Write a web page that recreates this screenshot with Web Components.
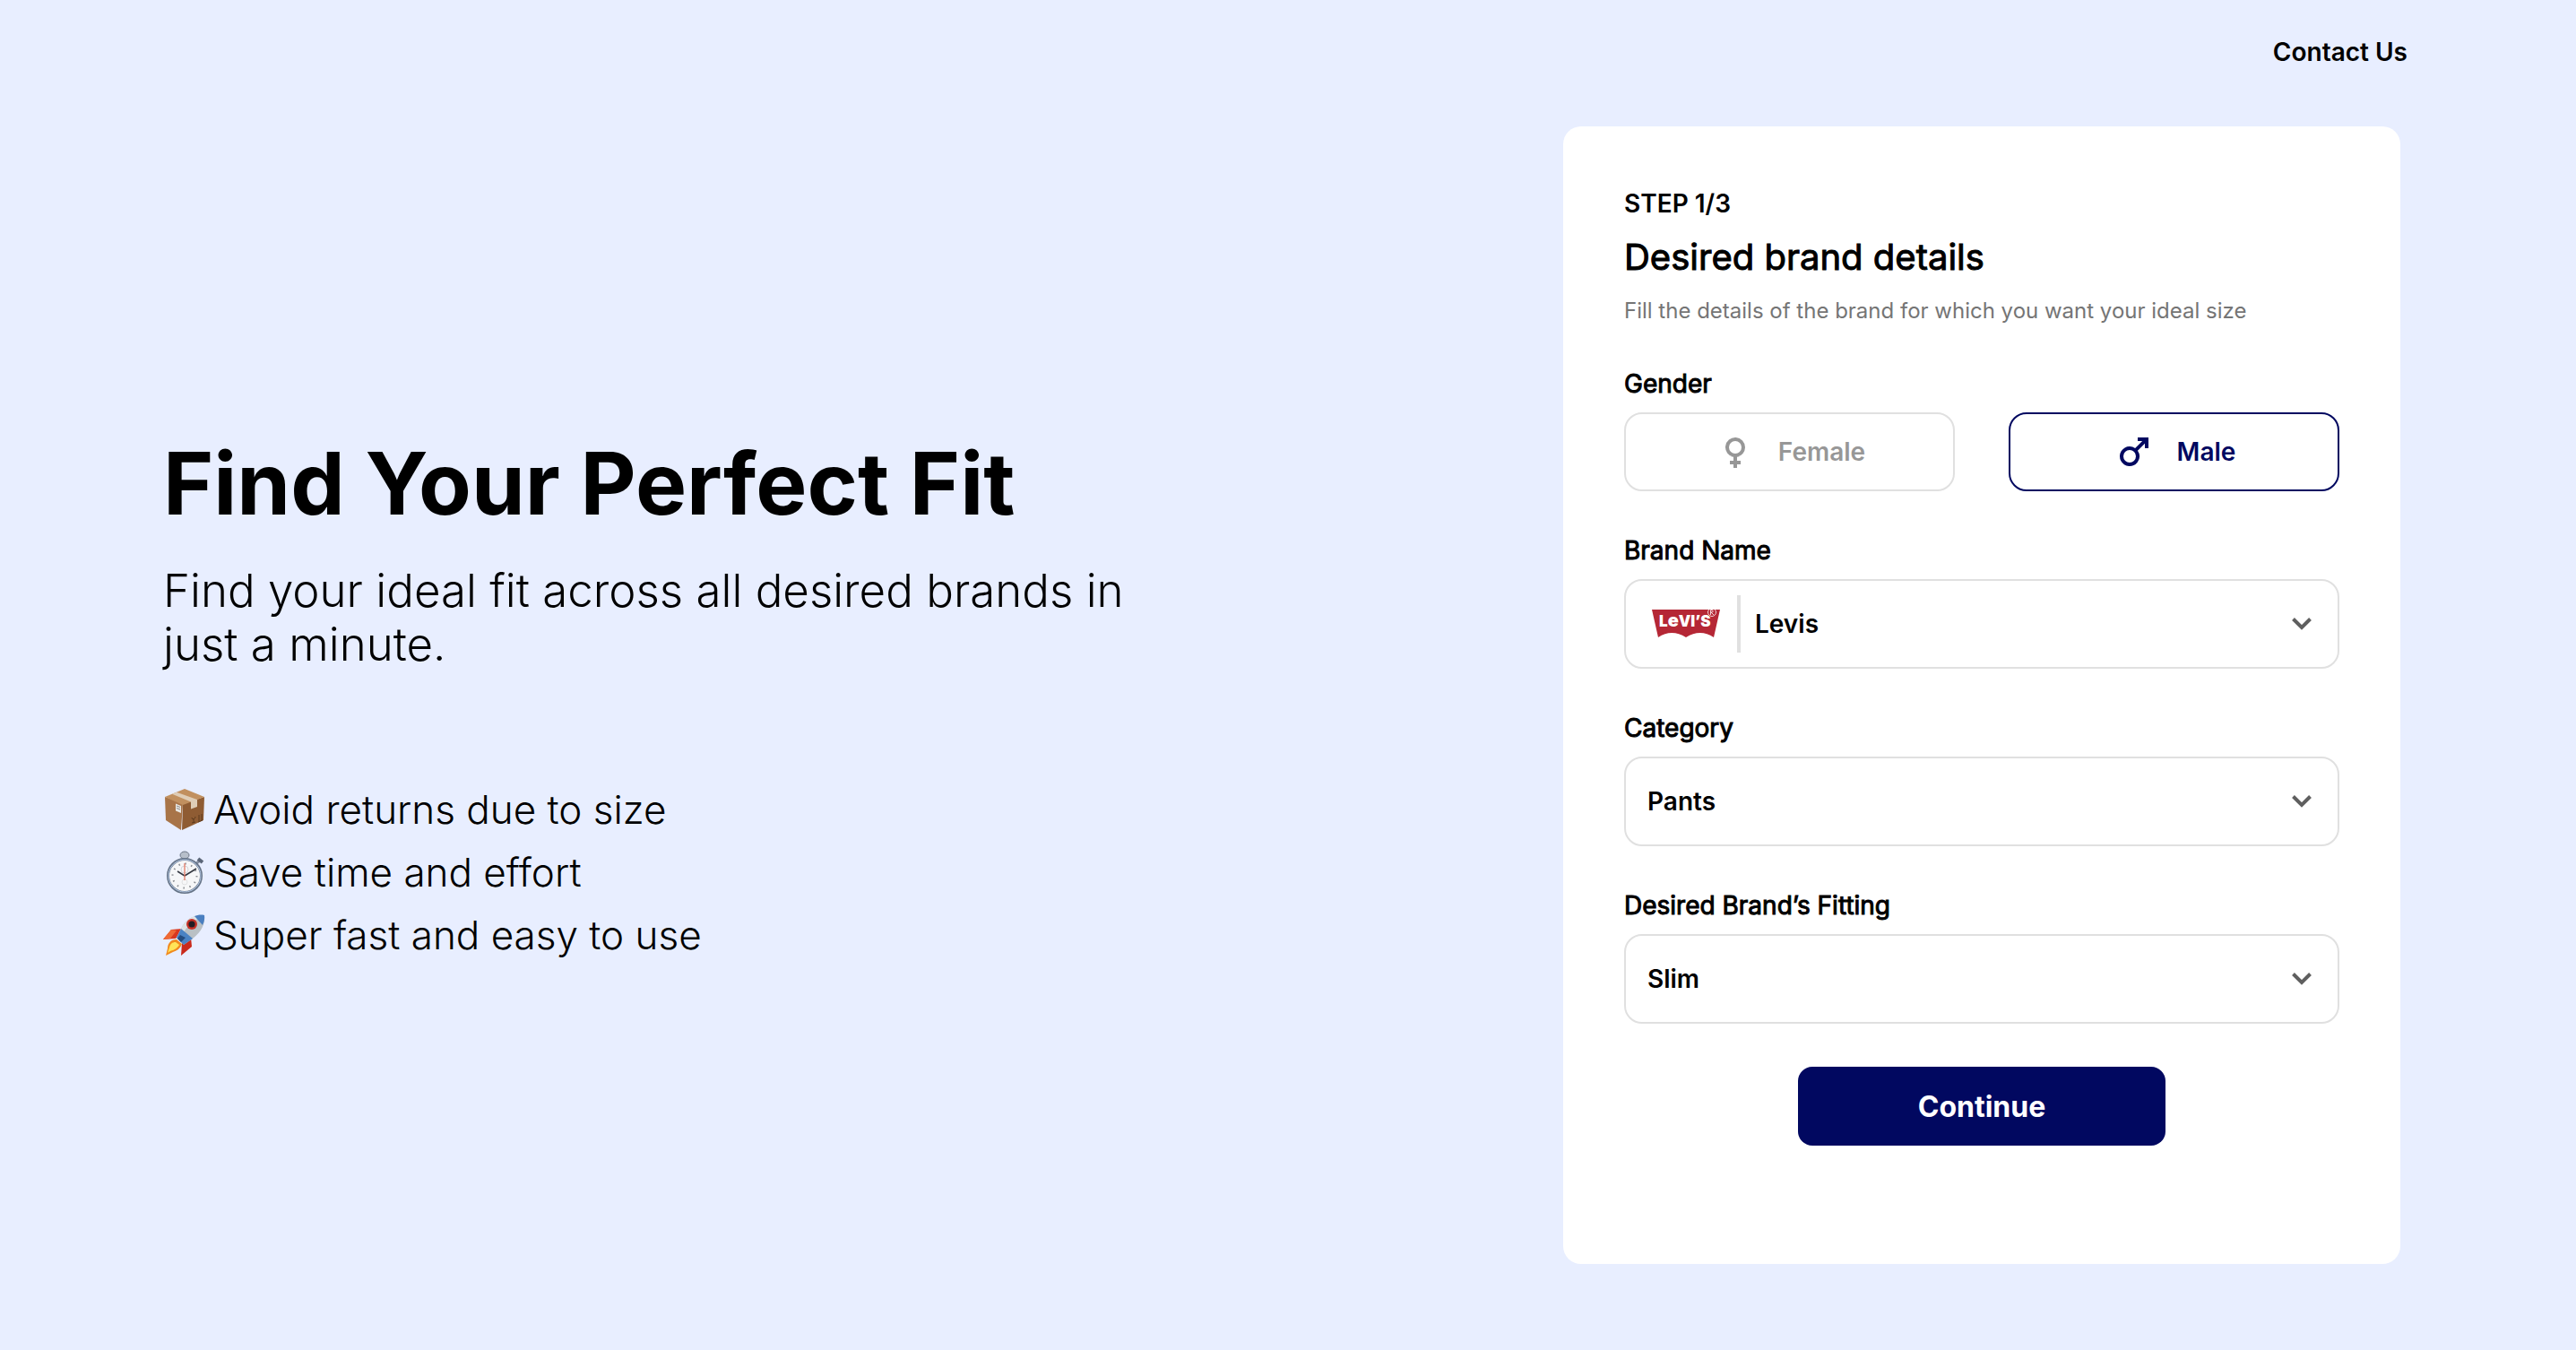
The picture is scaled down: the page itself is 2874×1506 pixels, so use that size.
<!DOCTYPE html>
<html lang="en">
<head>
<meta charset="utf-8">
<meta name="viewport" content="width=device-width, initial-scale=1">
<title>Find Your Perfect Fit</title>
<style>
  html, body { margin: 0; min-height: 100%; }
  body {
    font-family: Inter, "Liberation Sans", sans-serif;
    color: #000;
    background: #e8eeff;
  }
</style>
</head>
<body>
<fit-page>
  <site-header slot="header"></site-header>
  <hero-intro>
    <span slot="title">Find Your Perfect Fit</span>
    <span slot="lead">Find your ideal fit across all desired brands in just a minute.</span>
    <benefit-item icon="package">Avoid returns due to size</benefit-item>
    <benefit-item icon="stopwatch">Save time and effort</benefit-item>
    <benefit-item icon="rocket">Super fast and easy to use</benefit-item>
  </hero-intro>
  <step-card slot="aside">
    <span slot="step">STEP 1/3</span>
    <span slot="title">Desired brand details</span>
    <span slot="hint">Fill the details of the brand for which you want your ideal size</span>
    <gender-field></gender-field>
    <select-field label="Brand Name" options="Levis,Wrangler,Lee" logo></select-field>
    <select-field label="Category" options="Pants,Shirts,Jackets"></select-field>
    <select-field label="Desired Brand’s Fitting" options="Slim,Regular,Relaxed"></select-field>
    <primary-button slot="action">Continue</primary-button>
  </step-card>
</fit-page>

<script>
const define = (name, html, setup) => {
  const template = document.createElement('template');
  template.innerHTML = html;
  customElements.define(name, class extends HTMLElement {
    constructor() {
      super();
      this.attachShadow({ mode: 'open' }).append(template.content.cloneNode(true));
    }
    connectedCallback() {
      if (setup && !this.ready) { this.ready = true; setup(this, this.shadowRoot); }
    }
  });
};

const icons = {
  package: `<svg viewBox="0 0 48 48" aria-hidden="true">
    <path d="M2 10 22 17 20 47 3 36Z" fill="#a87448"/>
    <path d="M22 18 46 10 45 36 21 47Z" fill="#8f5c33"/>
    <path d="M2 10 24 1 46 10 22 19Z" fill="#c1905f"/>
    <path d="M10 6.800 15 4.800 38 13V21L31 23.500V15.500Z" fill="#dfcdb6"/>
    <path d="M14 17.500 20 20V28L14 25.500Z" fill="#e9e7e2"/>
    <path d="M15 20l4 1.500M15 22.500l4 1.500" stroke="#8c8c8c"/>
    <path d="M32 33c0 3 4 2 4-1M34 34v5M32 39l4-1M40 30v7M43 29v7M39 38l5-2" stroke="#5c3a1e" fill="none"/>
  </svg>`,
  stopwatch: `<svg viewBox="0 0 48 48" aria-hidden="true">
    <rect x="21" y="4" width="6" height="8" fill="#8e98a8"/>
    <ellipse cx="24" cy="5" rx="5" ry="4" fill="#b7bfca" stroke="#6d7787"/>
    <path d="M36 15l5-4" stroke="#8791a2" stroke-width="3"/>
    <path d="M39 9l5 4" stroke="#5b6678" stroke-width="4"/>
    <circle cx="24" cy="28" r="18.500" fill="#f6f7f8" stroke="#667487" stroke-width="3"/>
    <circle cx="24" cy="28" r="18" fill="none" stroke="#b9cdea" stroke-width="1"/>
    <circle cx="24" cy="28" r="13.500" fill="none" stroke="#8a8d92" stroke-width="2" stroke-dasharray="1.500 5.560"/>
    <circle cx="24" cy="21" r="4" fill="none" stroke="#d4d6d9"/>
    <circle cx="24" cy="35" r="3" fill="none" stroke="#e0e1e3"/>
    <path d="M24 28 16 23M24 28 37 20" stroke="#333840" stroke-width="1.500"/>
    <path d="M24 33V14" stroke="#e4725b" stroke-width="1.200"/>
  </svg>`,
  rocket: `<svg viewBox="0 0 48 48" aria-hidden="true">
    <path d="M22 17 9 18 0 29 14 28Z" fill="#d8371f"/>
    <path d="M31 27 32 37 20 47 21 33Z" fill="#c92a1c"/>
    <path d="M9 18 15 19 8 28 0 29Z" fill="#ef6a35"/>
    <path d="M15 29 21 34C19 40 14 42 11 43L3 47 5 39C5 34 8 29 15 29Z" fill="#f18a1e"/>
    <path d="M14 32 18 35C15 40 11 41 8 42L5 44 7 38C8 34 10 32 14 32Z" fill="#ffe458"/>
    <path d="M46 2C34 1 25 6 20 17L15 27 23 35 33 28C43 20 47 12 46 2Z" fill="#b9c0c4"/>
    <path d="M46 2C34 1 25 6 20 17L15 27 18 30C24 15 34 8 46 2Z" fill="#dde3e6"/>
    <path d="M46 2C42 1 38 2 35 3L44 13C46 9 46.500 5 46 2Z" fill="#4a7fc0"/>
    <path d="M20 17 15 27 23 35 33 28Z" fill="#4b83c4"/>
    <path d="M19 24 16 28 20 32 25 27Z" fill="#254d80"/>
    <circle cx="32" cy="12" r="6" fill="#c63026"/>
    <circle cx="32" cy="12" r="3.600" fill="#231d24"/>
  </svg>`
};

define('fit-page', `
  <style>
    :host { display: flex; flex-direction: column; min-height: 100vh; }
    main { display: flex; justify-content: space-between; align-items: flex-start; gap: 64px; padding: 25px 196px 97px 182px; }
    ::slotted(hero-intro) { flex: 0 1 1100px; }
    ::slotted(step-card) { flex: 0 0 934px; }
  </style>
  <slot name="header"></slot>
  <main><slot></slot><slot name="aside"></slot></main>`);

define('site-header', `
  <style>
    :host { display: block; }
    nav { display: flex; justify-content: flex-end; padding: 36px 188px 36px 182px; }
    a { font-size: 28px; line-height: 44px; font-weight: 600; color: inherit; text-decoration: none; }
  </style>
  <nav><a href="#contact">Contact Us</a></nav>`);

define('hero-intro', `
  <style>
    :host { display: block; padding-top: 340px; }
    h1 { margin: 0; font-size: 96px; line-height: 116px; font-weight: 700; }
    p { margin: 32px 0 0; font-size: 51px; line-height: 60px; font-weight: 300; }
    .list { display: flex; flex-direction: column; margin-top: 119px; }
  </style>
  <h1><slot name="title"></slot></h1>
  <p><slot name="lead"></slot></p>
  <div class="list" role="list"><slot></slot></div>`);

define('benefit-item', `
  <style>
    :host { display: flex; align-items: center; gap: 8px; font-size: 44px; line-height: 70px; font-weight: 300; }
    .icon { display: flex; width: 48px; height: 48px; }
    svg { width: 48px; height: 48px; }
  </style>
  <span class="icon"></span><span><slot></slot></span>`,
  (host, root) => {
    host.setAttribute('role', 'listitem');
    root.querySelector('.icon').innerHTML = icons[host.getAttribute('icon')];
  });

define('step-card', `
  <style>
    :host { display: block; box-sizing: border-box; padding: 68px 68px 132px; border-radius: 20px; background: #fff; }
    .step { margin: 0; font-size: 28px; line-height: 36px; font-weight: 600; }
    h2 { margin: 16px 0 0; font-size: 40px; line-height: 52px; font-weight: 400; -webkit-text-stroke: 1px currentColor; }
    .hint { margin: 16px 0 0; font-size: 24px; line-height: 36px; color: #757575; }
    form { display: flex; flex-direction: column; gap: 48px; margin-top: 45px; }
    .action { display: flex; justify-content: center; }
  </style>
  <p class="step"><slot name="step"></slot></p>
  <h2><slot name="title"></slot></h2>
  <p class="hint"><slot name="hint"></slot></p>
  <form><slot></slot><div class="action"><slot name="action"></slot></div></form>`);

define('gender-field', `
  <style>
    :host { display: block; }
    fieldset { margin: 0; padding: 0; border: 0; min-width: 0; }
    legend { padding: 0; margin-bottom: 14px; font-size: 28px; line-height: 36px; -webkit-text-stroke: 1px currentColor; }
    .row { display: grid; grid-template-columns: 1fr 1fr; gap: 60px; }
    label {
      position: relative; display: flex; align-items: center; justify-content: center; gap: 24px;
      box-sizing: border-box; height: 88px; border: 2px solid #e0e0e0; border-radius: 20px;
      font-size: 28px; line-height: 36px; font-weight: 600; color: #979797; cursor: pointer;
    }
    label:has(input:checked) { border-color: #010860; color: #010860; }
    input { position: absolute; inset: 0; margin: 0; opacity: 0; cursor: pointer; }
    svg { width: 48px; height: 48px; }
  </style>
  <fieldset>
    <legend>Gender</legend>
    <div class="row">
      <label><input type="radio" name="gender" value="female">
        <svg viewBox="0 0 24 24" fill="currentColor" aria-hidden="true"><path d="M17.500 9.500a5.500 5.500 0 1 0-6.500 5.410V17H9v2h2v2h2v-2h2v-2h-2v-2.090a5.510 5.510 0 0 0 4.500-5.410Zm-9 0a3.500 3.500 0 1 1 7 0 3.500 3.500 0 0 1-7 0Z"/></svg>
        Female</label>
      <label><input type="radio" name="gender" value="male" checked>
        <svg viewBox="0 0 24 24" fill="currentColor" aria-hidden="true"><path d="M9.500 11a3.500 3.500 0 1 1 0 7 3.500 3.500 0 0 1 0-7Zm0-2a5.500 5.500 0 1 0 4.460 8.720 5.500 5.500 0 0 0 .03-6.290L18 7.420V10h2V4h-6v2h2.580l-4.010 4.010A5.480 5.480 0 0 0 9.500 9Z"/></svg>
        Male</label>
    </div>
  </fieldset>`);

define('select-field', `
  <style>
    :host { display: block; }
    label { display: block; margin-bottom: 14px; font-size: 28px; line-height: 36px; -webkit-text-stroke: 1px currentColor; }
    .box { display: flex; align-items: center; box-sizing: border-box; height: 100px; padding: 0 28px 0 24px; border: 2px solid #e0e0e0; border-radius: 20px; }
    .brand { display: none; align-items: center; height: 64px; padding: 0 19px 0 5px; margin-right: 16px; border-right: 4px solid #e0e0e0; }
    :host([logo]) .brand { display: flex; }
    .brand svg { width: 76px; height: 32px; }
    select { flex: 1; min-width: 0; height: 64px; margin: 0; padding: 0; border: 0; outline: 0; background: none; appearance: none; color: inherit; font: 600 28px/36px Inter, "Liberation Sans", sans-serif; }
    .arrow { width: 24px; height: 16px; pointer-events: none; }
  </style>
  <label for="control"></label>
  <div class="box">
    <span class="brand">
      <svg viewBox="0 0 76 32" role="img" aria-label="Levi's">
        <path d="M0 0H76L69 31Q54 21 38 31Q22 21 7 31Z" fill="#b52735"/>
        <g fill="#fff" font-family="Inter, sans-serif" font-weight="900">
          <text x="8" y="19" font-size="17">L<tspan font-size="20">e</tspan>VI’S</text>
        </g>
        <circle cx="67" cy="3" r="4.500" fill="none" stroke="#f3d5d8"/>
        <path d="M65.500 6V.5H67.500Q69 2 67.500 3H66L69 6" fill="none" stroke="#f3d5d8"/>
      </svg>
    </span>
    <select id="control"></select>
    <svg class="arrow" viewBox="0 0 24 16" aria-hidden="true"><path d="M2.500 2.500 12 12 21.500 2.500" fill="none" stroke="#5f5f5f" stroke-width="4"/></svg>
  </div>`,
  (host, root) => {
    root.querySelector('label').textContent = host.getAttribute('label');
    for (const name of host.getAttribute('options').split(',')) root.querySelector('select').add(new Option(name));
  });

define('primary-button', `
  <style>
    :host { display: block; }
    button { width: 410px; height: 88px; padding: 2px 0 0; border: 0; border-radius: 16px; background: #010860; color: #fff; font: 700 32px/40px Inter, "Liberation Sans", sans-serif; cursor: pointer; }
  </style>
  <button type="button"><slot></slot></button>`);
</script>
</body>
</html>
